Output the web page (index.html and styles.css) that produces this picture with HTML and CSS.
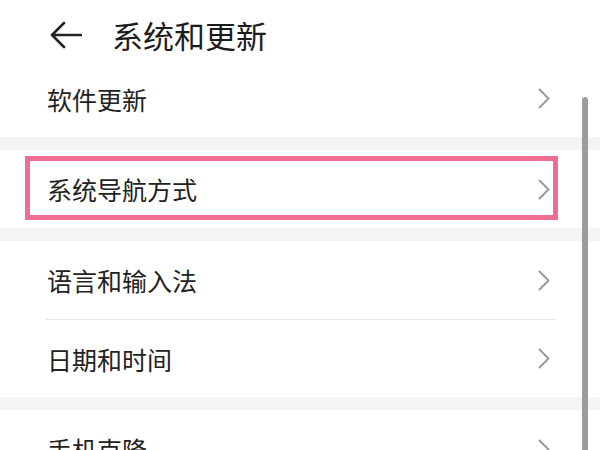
FILE: index.html
```html
<!DOCTYPE html>
<html lang="zh-CN">
<head>
<meta charset="utf-8">
<link rel="stylesheet" href="styles.css">
</head>
<body>
<div class="screen">
  <header class="header">
    <svg class="back" width="32" height="28" viewBox="0 0 32 28"><path d="M14 2 L2 14 L14 26 M2 14 H31" fill="none" stroke="#222" stroke-width="2.6" stroke-linecap="round" stroke-linejoin="round"/></svg>
    <h1 class="title">系统和更新</h1>
  </header>
  <section class="group">
    <div class="row first"><span class="label">软件更新</span><svg class="chev" width="12" height="21" viewBox="0 0 12 21"><path d="M1.5 1.5 L10.5 10.5 L1.5 19.5" fill="none" stroke="#9a9a9a" stroke-width="2" stroke-linecap="round" stroke-linejoin="round"/></svg></div>
  </section>
  <section class="group">
    <div class="row"><span class="label">系统导航方式</span><svg class="chev" width="12" height="21" viewBox="0 0 12 21"><path d="M1.5 1.5 L10.5 10.5 L1.5 19.5" fill="none" stroke="#9a9a9a" stroke-width="2" stroke-linecap="round" stroke-linejoin="round"/></svg><div class="mark"></div></div>
  </section>
  <section class="group">
    <div class="row"><span class="label">语言和输入法</span><svg class="chev" width="12" height="21" viewBox="0 0 12 21"><path d="M1.5 1.5 L10.5 10.5 L1.5 19.5" fill="none" stroke="#9a9a9a" stroke-width="2" stroke-linecap="round" stroke-linejoin="round"/></svg></div>
    <div class="divider"></div>
    <div class="row short"><span class="label">日期和时间</span><svg class="chev" width="12" height="21" viewBox="0 0 12 21"><path d="M1.5 1.5 L10.5 10.5 L1.5 19.5" fill="none" stroke="#9a9a9a" stroke-width="2" stroke-linecap="round" stroke-linejoin="round"/></svg></div>
  </section>
  <section class="group">
    <div class="row"><span class="label">手机克隆</span><svg class="chev" width="12" height="21" viewBox="0 0 12 21"><path d="M1.5 1.5 L10.5 10.5 L1.5 19.5" fill="none" stroke="#9a9a9a" stroke-width="2" stroke-linecap="round" stroke-linejoin="round"/></svg></div>
  </section>
  <div class="scrollbar"></div>
</div>
</body>
</html>
```
FILE: styles.css
```css
html, body {
  margin: 0;
  padding: 0;
}
body {
  width: 600px;
  height: 450px;
  overflow: hidden;
  background: #f4f4f4;
  font-family: "Noto Sans CJK SC", "Noto Sans", sans-serif;
  color: #222;
}
.screen {
  position: relative;
  width: 600px;
  height: 450px;
  overflow: hidden;
  display: flex;
  flex-direction: column;
}
.header {
  box-sizing: border-box;
  background: #fff;
  height: 60px;
  flex-shrink: 0;
  display: flex;
  align-items: center;
  padding: 10px 0 0 50px;
}
.back {
  display: block;
}
.title {
  margin: 0 0 0 30px;
  font-size: 31px;
  font-weight: 400;
  line-height: 40px;
  color: #1c1c1c;
}
.group {
  background: #fff;
  display: flex;
  flex-direction: column;
  flex-shrink: 0;
}
.group + .group {
  margin-top: 13px;
}
.row {
  position: relative;
  height: 78px;
  display: flex;
  align-items: center;
  justify-content: space-between;
  padding: 0 50px 0 47px;
}
.row.first,
.row.short {
  height: 77px;
}
.label {
  font-size: 25px;
  line-height: 32px;
  color: #222;
}
.chev {
  display: block;
}
.divider {
  height: 1px;
  background: #e6e6e6;
  margin: 0 45px 0 46px;
}
.mark {
  position: absolute;
  left: 25px;
  right: 42px;
  top: 6px;
  bottom: 8px;
  border: 5px solid #f06c92;
}
.scrollbar {
  position: absolute;
  left: 582px;
  top: 97px;
  width: 6px;
  height: 360px;
  border-radius: 3px;
  background: #9c9c9c;
}
```
